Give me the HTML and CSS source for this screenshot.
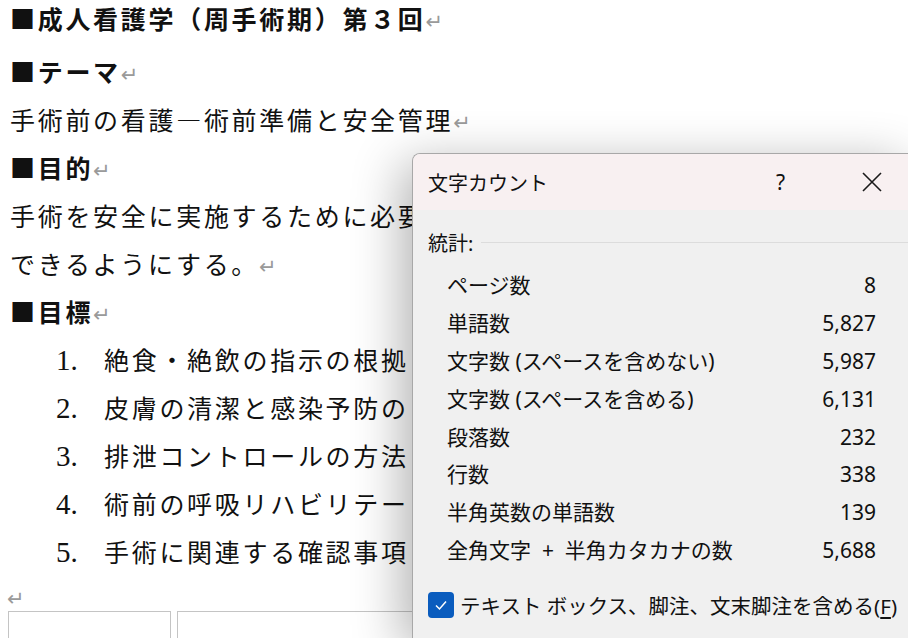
FILE: index.html
```html
<!DOCTYPE html>
<html lang="ja">
<head>
    <meta charset="UTF-8">
    <title>文字カウント</title>
    <link rel="stylesheet" href="styles.css">
</head>
<body>
<div class="doc">
    <div class="line first bold">■成人看護学（周手術期）第３回<span class="ret">↵</span></div>
    <div class="line bold">■テーマ<span class="ret">↵</span></div>
    <div class="line">手術前の看護―術前準備と安全管理<span class="ret">↵</span></div>
    <div class="line bold">■目的<span class="ret">↵</span></div>
    <div class="line clip">手術を安全に実施するために必要</div>
    <div class="line">できるようにする。<span class="ret">↵</span></div>
    <div class="line bold">■目標<span class="ret">↵</span></div>
    <ol class="goals">
        <li><span class="num">1.</span>絶食・絶飲の指示の根拠</li>
        <li><span class="num">2.</span>皮膚の清潔と感染予防の</li>
        <li><span class="num">3.</span>排泄コントロールの方法</li>
        <li><span class="num">4.</span>術前の呼吸リハビリテー</li>
        <li><span class="num">5.</span>手術に関連する確認事項</li>
    </ol>
    <div class="line empty"><span class="ret">↵</span></div>
    <div class="cells">
        <div class="cell narrow"></div>
        <div class="cell wide"></div>
    </div>
</div>

<!-- 文字カウント ダイアログ -->
<div class="dialog">
    <div class="titlebar">
        <span class="title">文字カウント</span>
        <span class="help">?</span>
        <svg class="close" width="20" height="20" viewBox="0 0 20 20">
            <path d="M1 1 L19 19 M19 1 L1 19" stroke="#1a1a1a" stroke-width="1.6" fill="none"/>
        </svg>
    </div>
    <div class="body">
        <div class="group">
            <span>統計:</span>
            <span class="rule"></span>
        </div>
        <div class="stats">
            <div class="row"><span>ページ数</span><span>8</span></div>
            <div class="row"><span>単語数</span><span>5,827</span></div>
            <div class="row"><span>文字数 (スペースを含めない)</span><span>5,987</span></div>
            <div class="row"><span>文字数 (スペースを含める)</span><span>6,131</span></div>
            <div class="row"><span>段落数</span><span>232</span></div>
            <div class="row"><span>行数</span><span>338</span></div>
            <div class="row"><span>半角英数の単語数</span><span>139</span></div>
            <div class="row"><span>全角文字 &nbsp;+ &nbsp;半角カタカナの数</span><span>5,688</span></div>
        </div>
        <label class="check">
            <span class="box">
                <svg width="14" height="14" viewBox="0 0 14 14">
                    <path d="M2 7.5 L5.5 11 L12 3.5" stroke="#ffffff" stroke-width="1.5" fill="none"/>
                </svg>
            </span>
            <span>テキスト ボックス、脚注、文末脚注を含める(<u>F</u>)</span>
        </label>
    </div>
</div>
</body>
</html>
```

FILE: styles.css
```css
html, body {
    margin: 0;
    background-color: #ffffff;
    overflow: hidden;
    height: 100%;
}
.doc {
    font-family: "Noto Sans CJK JP", "Liberation Serif", serif;
    font-size: 25px;
    color: #111111;
    letter-spacing: 2.7px;
    padding-left: 10px;
    height: 638px;
    overflow: hidden;
    white-space: nowrap;
}
.line {
    height: 48px;
    line-height: 48px;
}
.line.clip {
    width: 402px;
    overflow: hidden;
}
.line.first {
    height: 36px;
    line-height: 36px;
    margin-bottom: 11px;
}
.bold {
    font-weight: bold;
}
.ret {
    color: #9a9a9a;
    font-family: "DejaVu Sans", sans-serif;
    font-size: 21px;
    font-weight: normal;
    letter-spacing: 0;
}
.goals {
    list-style: none;
    margin: 0;
    padding: 0 0 0 46px;
}
.goals li {
    height: 48px;
    line-height: 48px;
}
.num {
    display: inline-block;
    width: 48px;
    font-family: "Liberation Serif", serif;
    font-size: 29px;
    letter-spacing: 0;
}
.line.empty {
    height: 36px;
    line-height: 40px;
    margin-left: -3px;
}
.cells {
    display: flex;
    gap: 6px;
    margin-left: -2px;
}
.cell {
    flex-shrink: 0;
    height: 30px;
    border: 1px solid #c4c4c4;
    border-bottom: none;
}
.cell.narrow {
    width: 161px;
}
.cell.wide {
    width: 300px;
}

.dialog {
    position: absolute;
    left: 412px;
    top: 153px;
    width: 500px;
    height: 484px;
    background-color: #f0f0f0;
    border: 1px solid #a8a8a8;
    border-right: none;
    border-bottom: none;
    border-radius: 8px 0 0 0;
    box-shadow: -10px 10px 50px rgba(0,0,0,0.3);
    font-family: "Noto Sans", "Noto Sans CJK JP", sans-serif;
    color: #111111;
    overflow: hidden;
}
.titlebar {
    height: 56px;
    background-color: #f8f0f1;
    display: flex;
    align-items: center;
    padding-left: 15px;
    font-size: 20px;
}
.title {
    width: 348px;
}
.help {
    width: 86px;
    font-size: 21px;
}
.close {
    display: block;
}
.body {
    padding: 14px 0 0 15px;
}
.group {
    display: flex;
    align-items: center;
    font-size: 20px;
    height: 36px;
}
.rule {
    flex: 1;
    height: 1px;
    background-color: #dcdcdc;
    margin-left: 8px;
}
.stats {
    width: 429px;
    margin: 7px 0 0 19px;
    font-size: 21px;
}
.row {
    display: flex;
    justify-content: space-between;
    height: 37.9px;
    line-height: 37.9px;
}
.check {
    display: flex;
    align-items: center;
    gap: 6px;
    margin-top: 20px;
    font-size: 20.5px;
}
.box {
    width: 26px;
    height: 26px;
    border-radius: 4px;
    background-color: #0a5cbe;
    display: flex;
    align-items: center;
    justify-content: center;
}
.check u {
    text-underline-offset: 3px;
}
```
